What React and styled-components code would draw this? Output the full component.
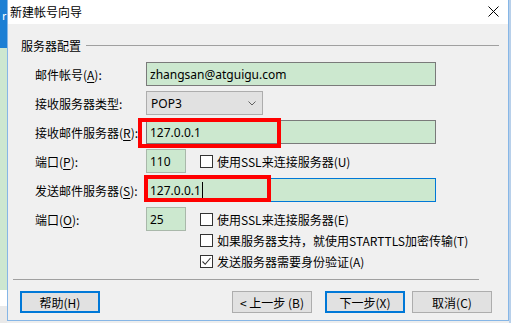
import React from "react";
import styled, { createGlobalStyle } from "styled-components";

const Global = createGlobalStyle`
  html, body { margin: 0; padding: 0; background: #f4f4f4; }
  body { font-family: "Noto Sans CJK SC", "Noto Sans", sans-serif; }
  #root { width: 511px; height: 323px; overflow: hidden; }
`;

const CJK = `"Noto Sans CJK SC", "Noto Sans", sans-serif`;
const LATIN = `"Noto Sans", "Noto Sans CJK SC", sans-serif`;

const Desktop = styled.div`
  display: flex;
  width: 511px;
  height: 323px;
  overflow: hidden;
  background: #eeeeee;
`;

const SideStrip = styled.div`
  width: ${(p) => p.$w}px;
  flex: none;
  display: flex;
  flex-direction: column;
`;

const StripPart = styled.div`
  height: ${(p) => p.$h}px;
  background: ${(p) => p.$bg};
  flex: none;
  color: #fff;
  font-size: 11px;
  line-height: 1;
  overflow: hidden;
`;

const Window = styled.div`
  width: 500px;
  height: 320px;
  flex: none;
  display: flex;
  flex-direction: column;
  border: 1px solid #86b6e6;
  border-top: none;
`;

const TitleBar = styled.div`
  height: 22px;
  flex: none;
  background: #ffffff;
  display: flex;
  align-items: center;
  justify-content: space-between;
  padding: 0 9px 2px 2px;
`;

const Title = styled.span`
  font-family: ${CJK};
  font-size: 12px;
  color: #000;
`;

const Body = styled.div`
  position: relative;
  flex: 1;
  background: #f0f0f0;
  display: flex;
  flex-direction: column;
`;

const GroupHead = styled.div`
  display: flex;
  align-items: center;
  gap: 5px;
  height: 14px;
  margin: 14px 9px 0 13px;
`;

const GroupTitle = styled.span`
  font-family: ${CJK};
  font-size: 12px;
  color: #000;
`;

const Rule = styled.div`
  height: 1px;
  background: #a0a0a0;
  flex: ${(p) => (p.$w ? "none" : 1)};
  width: ${(p) => (p.$w ? `${p.$w}px` : "auto")};
  margin-left: ${(p) => p.$ml || 0}px;
  margin-top: ${(p) => p.$mt || 0}px;
`;

const Form = styled.div`
  display: flex;
  flex-direction: column;
  gap: 5px;
  margin: 10px 0 0 27px;
`;

const Row = styled.div`
  display: flex;
  align-items: center;
  height: 24px;
`;

const Label = styled.div`
  width: 111px;
  flex: none;
  font-family: ${CJK};
  font-size: 12px;
  color: #000;
  u { text-decoration: underline; text-underline-offset: 2px; }
`;

const TextBox = styled.div`
  box-sizing: border-box;
  width: ${(p) => p.$w}px;
  height: 24px;
  background: #cce8cf;
  border: 1px solid ${(p) => p.$border || "#7a7a7a"};
  display: flex;
  align-items: center;
  padding-left: 3px;
  font-family: ${LATIN};
  font-size: 12px;
  color: #000;
`;

const Caret = styled.span`
  width: 1px;
  height: 17px;
  background: #000;
  margin-left: 1px;
`;

const Select = styled.div`
  box-sizing: border-box;
  width: 117px;
  height: 24px;
  background: #e1e1e1;
  border: 1px solid #adadad;
  display: flex;
  align-items: center;
  justify-content: space-between;
  padding: 0 6px 0 4px;
  font-family: ${LATIN};
  font-size: 12px;
  color: #000;
`;

const Check = styled.label`
  display: flex;
  align-items: center;
  gap: 4px;
  margin-left: ${(p) => p.$ml || 0}px;
  font-family: ${CJK};
  font-size: 12px;
  color: #000;
`;

const Box = styled.span`
  box-sizing: border-box;
  width: 13px;
  height: 13px;
  flex: none;
  background: #ffffff;
  border: 1px solid #333333;
  display: flex;
  align-items: center;
  justify-content: center;
`;

const CheckRows = styled.div`
  display: flex;
  flex-direction: column;
  gap: 5px;
  margin: 1px 0 0 192px;
`;

const CheckRow = styled.div`
  height: 16px;
  display: flex;
  align-items: center;
`;

const Buttons = styled.div`
  display: flex;
  align-items: center;
  margin: 11px 16px 0 12px;
`;

const Button = styled.div`
  box-sizing: border-box;
  width: ${(p) => p.$w || 80}px;
  height: 22px;
  flex: none;
  background: #e1e1e1;
  border: ${(p) => (p.$focus ? "2px solid #0078d7" : "1px solid #adadad")};
  display: flex;
  align-items: center;
  justify-content: center;
  margin-left: ${(p) => p.$ml || 0}px;
  font-family: ${CJK};
  font-size: 12px;
  color: #000;
`;

const Spacer = styled.div`
  flex: 1;
`;

const Mark = styled.div`
  position: absolute;
  left: ${(p) => p.$x}px;
  top: ${(p) => p.$y}px;
  width: ${(p) => p.$w}px;
  height: ${(p) => p.$h}px;
  box-sizing: border-box;
  border: 4px solid #ff0000;
  pointer-events: none;
`;

const CloseIcon = () => (
  <svg width="11" height="11" viewBox="0 0 11 11">
    <path d="M0.5 0.5 L10.5 10.5 M10.5 0.5 L0.5 10.5" stroke="#000" strokeWidth="1" fill="none" />
  </svg>
);

const Chevron = () => (
  <svg width="8" height="5" viewBox="0 0 8 5">
    <path d="M0.5 0.5 L4 4 L7.5 0.5" stroke="#606060" strokeWidth="1" fill="none" />
  </svg>
);

const Tick = () => (
  <svg width="11" height="11" viewBox="0 0 11 11">
    <path d="M1.5 5.5 L4.2 8.3 L9.5 2" stroke="#333" strokeWidth="1.1" fill="none" />
  </svg>
);

const CheckBox = ({ checked, children, ml }) => (
  <Check $ml={ml}>
    <Box>{checked && <Tick />}</Box>
    {children}
  </Check>
);

export default function App() {
  return (
    <>
      <Global />
      <Desktop>
        <SideStrip $w={7}>
          <StripPart $h={48} $bg="#1c7fd4">
            <div style={{ padding: "10px 0 0 2px" }}>r</div>
          </StripPart>
          <StripPart $h={242} $bg="#cde7d0" />
          <StripPart $h={16} $bg="#ffffff" />
          <StripPart $h={17} $bg="#e9e9e9" />
        </SideStrip>
        <Window>
          <TitleBar>
            <Title>新建帐号向导</Title>
            <CloseIcon />
          </TitleBar>
          <Body>
            <GroupHead>
              <GroupTitle>服务器配置</GroupTitle>
              <Rule />
            </GroupHead>
            <Form>
              <Row>
                <Label>邮件帐号(<u>A</u>):</Label>
                <TextBox $w={290}>zhangsan@atguigu.com</TextBox>
              </Row>
              <Row>
                <Label>接收服务器类型:</Label>
                <Select>
                  POP3
                  <Chevron />
                </Select>
              </Row>
              <Row>
                <Label>接收邮件服务器(<u>R</u>):</Label>
                <TextBox $w={290}>127.0.0.1</TextBox>
              </Row>
              <Row>
                <Label>端口(<u>P</u>):</Label>
                <TextBox $w={40} $border="#a9b8aa">110</TextBox>
                <CheckBox ml={14}>使用SSL来连接服务器(U)</CheckBox>
              </Row>
              <Row>
                <Label>发送邮件服务器(<u>S</u>):</Label>
                <TextBox $w={290} $border="#0078d7">
                  127.0.0.1
                  <Caret />
                </TextBox>
              </Row>
              <Row>
                <Label>端口(<u>O</u>):</Label>
                <TextBox $w={40} $border="#a9b8aa">25</TextBox>
                <CheckBox ml={14}>使用SSL来连接服务器(E)</CheckBox>
              </Row>
            </Form>
            <CheckRows>
              <CheckRow>
                <CheckBox>如果服务器支持，就使用STARTTLS加密传输(T)</CheckBox>
              </CheckRow>
              <CheckRow>
                <CheckBox checked>发送服务器需要身份验证(A)</CheckBox>
              </CheckRow>
            </CheckRows>
            <Rule $w={466} $ml={5} $mt={10} />
            <Buttons>
              <Button $focus>帮助(H)</Button>
              <Spacer />
              <Button>&lt; 上一步 (B)</Button>
              <Button $focus $ml={13}>下一步(X)</Button>
              <Button $ml={7}>取消(C)</Button>
            </Buttons>
            <Mark $x={130} $y={94} $w={143} $h={30} />
            <Mark $x={136} $y={151} $w={127} $h={27} />
          </Body>
        </Window>
        <SideStrip $w={3}>
          <StripPart $h={323} $bg="#b8d0ea" />
        </SideStrip>
      </Desktop>
    </>
  );
}
